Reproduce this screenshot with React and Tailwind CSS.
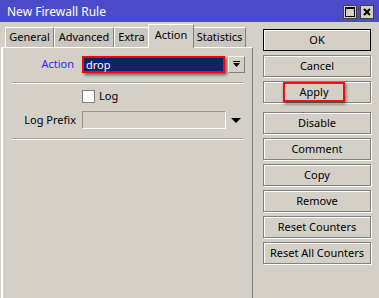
import React from 'react';

const tabs = [
  { name: 'General', w: 'w-[49px]' },
  { name: 'Advanced', w: 'w-[60px]' },
  { name: 'Extra', w: 'w-[35px]' },
  { name: 'Action', w: 'w-[46px]', active: true },
  { name: 'Statistics', w: 'w-[53px]' },
];

const buttons = ['Cancel', 'Apply', 'Disable', 'Comment', 'Copy', 'Remove', 'Reset Counters', 'Reset All Counters'];

const Btn = ({ children, className = '' }) => (
  <div
    className={`h-[22px] flex items-center justify-center bg-[#d4d0c8] border border-[#808080] shadow-[inset_1px_1px_0_#fff,1px_1px_0_#fff] ${className}`}
  >
    {children}
  </div>
);

export default function App() {
  return (
    <div className="w-[379px] h-[298px] overflow-hidden bg-[#d4d0c8] font-['Noto_Sans',sans-serif] text-[11px] text-black flex flex-col">
      {/* title bar */}
      <div className="h-[22px] shrink-0 bg-[#4b4bc9] flex items-start pl-[7px] pr-[5px]">
        <span className="text-white text-[12px] leading-[16px] pt-[4px]">New Firewall Rule</span>
        <div className="ml-auto mt-[5px] flex gap-[3px]">
          <div className="w-[14px] h-[14px] bg-[#d4d0c8] border border-[#404040] flex items-center justify-center">
            <svg width="10" height="10" viewBox="0 0 10 10">
              <rect x="0.5" y="0.5" width="9" height="9" fill="none" stroke="#000" />
              <rect x="0" y="0" width="10" height="2" fill="#000" />
            </svg>
          </div>
          <div className="w-[14px] h-[14px] bg-[#d4d0c8] border border-[#404040] flex items-center justify-center">
            <svg width="8" height="8" viewBox="0 0 8 8">
              <path d="M1 1 L7 7 M7 1 L1 7" stroke="#000" strokeWidth="2" />
            </svg>
          </div>
        </div>
      </div>

      <div className="flex flex-1 min-h-0">
        {/* left: tabs + panel */}
        <div className="w-[253px] flex flex-col">
          <div className="h-[25px] shrink-0 flex items-end pl-[5px]">
            {tabs.map((t) =>
              t.active ? (
                <div
                  key={t.name}
                  className={`${t.w} h-[24px] -mb-[1px] -mx-[1px] relative z-10 bg-[#d4d0c8] border-t border-l border-white border-r border-r-[#808080] flex items-center justify-center pb-[2px]`}
                >
                  {t.name}
                </div>
              ) : (
                <div
                  key={t.name}
                  className={`${t.w} h-[20px] bg-[#cbc7bf] border-t border-l border-white border-r border-r-[#808080] flex items-center justify-center`}
                >
                  {t.name}
                </div>
              )
            )}
          </div>
          <div className="flex-1 ml-[1px] border-t border-white border-l-2 border-r border-r-[#808080]">
            <div className="pt-[8px]">
              <div className="flex items-center h-[17px]">
                <div className="w-[72px] text-right text-[#2a2aff] pr-[1px]">Action</div>
                <div className="ml-[7px] w-[143px] h-[17px] bg-[#0a246a] border-2 border-[#ff0000] shadow-[2px_2px_3px_rgba(0,0,0,0.55)] text-white flex items-center pl-[2px] leading-none">
                  drop
                </div>
                <div className="ml-[3px] -mt-[1px] w-[17px] h-[17px] bg-[#d4d0c8] border border-[#f4f2ee] border-r-[#808080] border-b-[#808080] flex items-center justify-center">
                  <svg width="7" height="7" viewBox="0 0 7 7">
                    <rect x="0" y="0" width="7" height="1" fill="#000" />
                    <polygon points="0,2 7,2 3.5,6" fill="#000" />
                  </svg>
                </div>
              </div>
              <div className="mt-[9px] ml-[9px] w-[231px] border-t border-[#aaa69e] border-b border-b-white" />
              <div className="mt-[6px] flex items-center h-[13px] pl-[79px]">
                <div className="w-[13px] h-[13px] bg-white border border-[#808080]" />
                <span className="ml-[4px]">Log</span>
              </div>
              <div className="mt-[8px] flex items-center h-[18px]">
                <div className="w-[73px] text-right">Log Prefix</div>
                <div className="ml-[6px] w-[144px] h-[18px] bg-[#d4d0c8] border border-[#9a968e] border-r-white border-b-white" />
                <svg className="ml-[5px]" width="10" height="5" viewBox="0 0 10 5">
                  <polygon points="0,0 10,0 5,5" fill="#000" />
                </svg>
              </div>
              <div className="mt-[9px] ml-[9px] w-[231px] border-t border-[#aaa69e] border-b border-b-white" />
            </div>
          </div>
        </div>

        {/* right: buttons */}
        <div className="ml-[10px] w-[108px] pt-[7px] flex flex-col gap-[4px]">
          <div className="h-[22px] flex items-center justify-center bg-[#d4d0c8] border border-black shadow-[inset_1px_1px_0_#fff]">
            OK
          </div>
          {buttons.map((b) =>
            b === 'Apply' ? (
              <Btn key={b}>
                <span className="w-[62px] h-[20px] flex items-center justify-center border-2 border-[#ee1111] shadow-[1px_2px_3px_rgba(0,0,0,0.5)] -ml-[6px]">
                  Apply
                </span>
              </Btn>
            ) : (
              <Btn key={b} className={b === 'Disable' ? 'mt-[5px]' : ''}>
                {b}
              </Btn>
            )
          )}
        </div>
      </div>
    </div>
  );
}
